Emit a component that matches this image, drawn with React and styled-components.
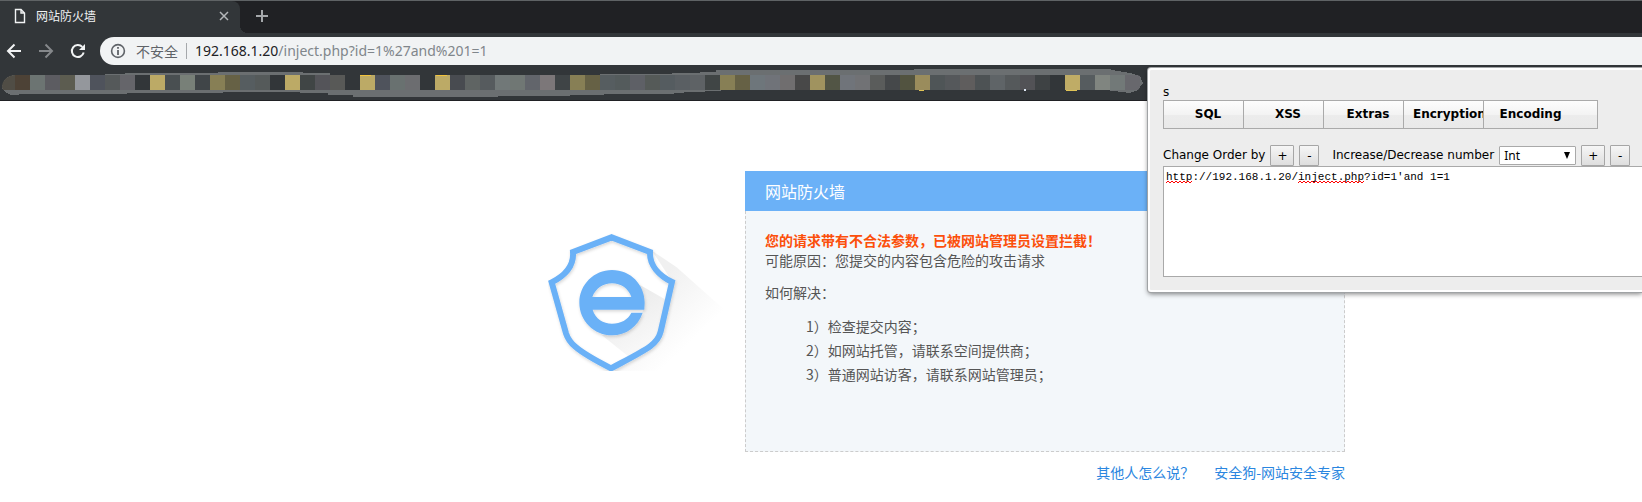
import React from "react";
import styled, { createGlobalStyle } from "styled-components";

const GlobalStyle = createGlobalStyle`
  * { box-sizing: border-box; }
  body {
    margin: 0;
    background: #fff;
    font-family: "Noto Sans CJK SC", sans-serif;
    font-size: 14px;
    line-height: 20px;
    overflow: hidden;
  }
`;

const Window = styled.div`
  position: relative;
  display: flex;
  flex-direction: column;
`;

/* Browser frame */

const TabStrip = styled.div`
  display: flex;
  align-items: stretch;
  height: 33px;
  background: #202124;
  border-top: 1px solid #5f6365;
`;

const Tab = styled.div`
  display: flex;
  align-items: center;
  gap: 10px;
  width: 240px;
  padding: 0 10px 2px 14px;
  background: #323639;
  border-radius: 0 8px 0 0;
  color: #f1f3f4;
  font-size: 12px;
`;

const TabTitle = styled.span`
  flex: 1;
`;

const IconButton = styled.button`
  display: flex;
  align-items: center;
  justify-content: center;
  flex: none;
  width: ${(p) => p.$size}px;
  height: ${(p) => p.$size}px;
  padding: 0;
  border: 0;
  background: none;
  color: ${(p) => p.$color || "#f1f3f4"};
`;

const NewTab = styled.div`
  display: flex;
  align-items: center;
  padding: 0 12px 2px;
`;

const Corner = styled.div`
  width: 8px;
  background: radial-gradient(circle at 100% 0, #202124 8px, #323639 8px);
  align-self: flex-end;
  height: 8px;
  margin-right: -8px;
`;

const Toolbar = styled.div`
  display: flex;
  align-items: center;
  gap: 12px;
  padding: 4px 0 4px 4px;
  background: #323639;
`;

const AddressBar = styled.div`
  display: flex;
  align-items: center;
  flex: 1;
  height: 28px;
  padding-left: 10px;
  border-radius: 14px 0 0 14px;
  background: #f1f3f4;
`;

const Security = styled.span`
  margin-left: 10px;
  padding-right: 8px;
  color: #5f6368;
  line-height: 16px;
  border-right: 1px solid #a5a8ab;
`;

const Url = styled.span`
  padding-left: 8px;
  color: #80868b;
  font-family: "Noto Sans", sans-serif;
`;

const Host = styled.span`
  color: #202124;
`;

const Bookmarks = styled.div`
  display: flex;
  height: 32px;
  background: #323639;
  border-bottom: 1px solid #202124;
  overflow: hidden;

  svg { flex: none; }
`;

/* Blocked page */

const Main = styled.main`
  display: flex;
  justify-content: center;
  align-items: flex-start;
  padding: 70px 0 0 251px;
`;

const LogoSlot = styled.div`
  flex: none;
  padding-top: 61px;

  svg { display: block; }
`;

const Notice = styled.section`
  width: 600px;
`;

const NoticeHeader = styled.h1`
  margin: 0;
  padding: 0 20px;
  background: #6bb1f7;
  color: #fff;
  font-size: 16px;
  font-weight: 400;
  line-height: 40px;
`;

const NoticeBody = styled.div`
  display: flex;
  flex-direction: column;
  gap: 12px;
  min-height: 241px;
  padding: 19px;
  border: 1px dashed #ccc;
  border-top: 0;
  background: #f3f7fa;
  color: #555;
`;

const Paragraph = styled.p`
  margin: 0;
`;

const Alert = styled.strong`
  display: block;
  color: #fc4f0b;
`;

const Steps = styled.ul`
  margin: 0;
  padding: 0 0 0 41px;
  list-style: none;
  line-height: 24px;
`;

const NoticeLinks = styled.nav`
  display: flex;
  justify-content: flex-end;
  gap: 20px;
  padding-top: 10px;
`;

const Link = styled.a`
  color: #2a86e0;
  text-decoration: none;
`;

/* Extension popup */

const Popup = styled.aside`
  position: absolute;
  top: 68px;
  right: 0;
  width: 494px;
  padding: 15px 0 13px 13px;
  border: 2px solid #fff;
  border-right: 0;
  border-radius: 3px 0 0 3px;
  background: #ededed;
  box-shadow: 0 0 0 1px #a0a3a5, 0 2px 5px rgba(0, 0, 0, 0.5);
  color: #000;
  font-family: "DejaVu Sans", sans-serif;
  font-size: 12px;
  line-height: 15px;
`;

const MenuBar = styled.div`
  display: inline-flex;
  height: 29px;
  margin-bottom: 16px;
  padding-right: 33px;
  border: 1px solid #aaa;
  background: linear-gradient(#fdfdfd, #f3f3f3 50%, #ececec 52%, #e9e9e9);
`;

const MenuItem = styled.button`
  width: 80px;
  padding: 0 0 2px 9px;
  border: 0;
  border-right: 1px solid #aaa;
  background: none;
  color: #000;
  font: bold 12px "DejaVu Sans", sans-serif;
  white-space: nowrap;
  overflow: hidden;

  &:last-child {
    padding-left: 13px;
    border-right: 0;
  }
`;

const Controls = styled.div`
  display: flex;
  align-items: center;
  gap: 5px;
  height: 21px;
`;

const Group = styled.div`
  display: flex;
  align-items: center;
  gap: 5px;
  margin-right: 8px;
`;

const StepButton = styled.button`
  width: ${(p) => (p.$wide ? 24 : 20)}px;
  height: 21px;
  padding: 0;
  border: 1px solid #a6a6a6;
  border-radius: 1px;
  background: linear-gradient(#f6f6f6, #dedede);
  color: #000;
  font: 12px "DejaVu Sans", sans-serif;
`;

const SelectWrap = styled.span`
  display: inline-flex;
  align-items: center;
  position: relative;

  svg {
    position: absolute;
    right: 6px;
    pointer-events: none;
  }
`;

const Select = styled.select`
  width: 77px;
  height: 19px;
  padding: 0 4px;
  appearance: none;
  border: 1px solid #a9a9a9;
  border-radius: 1px;
  background: #fff;
  color: #000;
  font: 12px "Noto Sans", sans-serif;
`;

const Editor = styled.div`
  position: relative;
  font: 11px/15px "Liberation Mono", monospace;

  svg {
    position: absolute;
    left: 3px;
    top: 14px;
    pointer-events: none;
  }
`;

const TextArea = styled.textarea`
  display: block;
  width: 100%;
  height: 111px;
  padding: 3px 2px;
  border: 1px solid #a9a9a9;
  border-right: 0;
  background: #fff;
  color: #000;
  font: inherit;
  resize: none;
`;

const BLANK = "#323639";
const GOLD = "#bcaa66";
const MOSAIC = [
  "#504d45", "#4d4236", "#6c7472", "#5c5c61", "#5c5c50", "#94979c", "#4f535c", "#55595a", "#65656a", BLANK,
  GOLD, "#494f51", "#788078", "#404548", "#877f55", "#666145", "#565d60", "#555a5a", BLANK, GOLD,
  "#404545", "#545459", "#585957", BLANK, GOLD, "#4f535c", "#697170", "#6c6d70", BLANK, GOLD,
  "#484b50", "#5f6463", "#565b5e", "#717878", "#707774", "#62656b", "#7c7779", "#3f4446", "#877f55", "#666145",
  "#565d60", "#545b5c", "#5e6066", "#555a58", "#555c60", "#5a5f63", "#5e6265", "#404545", "#877f55", "#666145",
  "#6e767b", "#707379", "#706e6f", "#484848", "#a0935f", "#525545", "#70747a", "#717275", "#5a5c5b", "#45484a",
  "#525340", "#9a8c5c", "#4f5557", "#55585b", "#5f5d5d", "#4d5254", "#5f6467", "#55595b", "#525256", "#3e4244",
  BLANK, "#bfac66", "#565c5f", "#808580", "#727978", "#68686d",
];

const SCRIBBLE =
  "M2 16C2 9 8 4 15 4H105V3H125V2H218V1H303V2H330V4H600V3H672V2H700V1H716V-1H914V-2H1110L1112 -1 1130 2 1140 5 1143 12 1138 19 1130 22 1106 19H721V20H705V21H684V22H674V23H604V24H570V25H498V26H353V24H328V22H300V21H223V22H127V23H19V24H11C5 21 2 19 2 16Z";

function BlurredBookmarks() {
  return (
    <svg width="1144" height="31" viewBox="0 -2 1144 31" aria-hidden="true" shapeRendering="crispEdges">
      <clipPath id="scribble">
        <path d={SCRIBBLE} />
      </clipPath>
      <path d={SCRIBBLE} fill="#6b6f71" />
      <g clipPath="url(#scribble)">
        {MOSAIC.map((color, i) => (
          <rect key={i} x={i * 15} y="4" width="15" height="15" fill={color} />
        ))}
      </g>
      <path d="M360 4h11M436 4h11" stroke="#f2c33c" />
      <path d="M919 19h5M1066 19h11" stroke="#e0c456" />
      <path d="M1024 18h2v2h-2z" fill="#dde6f2" />
    </svg>
  );
}

function Logo() {
  return (
    <svg width="197" height="139" viewBox="54 36 591 417" role="img" aria-label="logo">
      <defs>
        <linearGradient id="long" gradientUnits="userSpaceOnUse" x1="380" y1="180" x2="520" y2="330">
          <stop offset="0" stopColor="#e6e6e6" />
          <stop offset="1" stopColor="#fff" />
        </linearGradient>
        <linearGradient id="inner" gradientUnits="userSpaceOnUse" x1="300" y1="230" x2="390" y2="370">
          <stop offset="0" stopColor="#dedede" />
          <stop offset="1" stopColor="#f6f6f6" />
        </linearGradient>
        <filter id="soft" x="-10%" y="-10%" width="120%" height="120%">
          <feDropShadow dx="2" dy="5" stdDeviation="4" floodOpacity="0.16" />
        </filter>
      </defs>
      <path d="M366 92L440 142 600 284 480 452H250L400 340 430 190Z" fill="url(#long)" opacity="0.6" />
      <path
        d="M245 52L360 96C358 135 386 166 426 186L392 335C382 375 350 388 243 445 130 388 116 365 108 340L65 187C107 166 132 135 129 96Z"
        fill="#fff"
      />
      <path d="M330 195L418 245 392 335C382 370 345 392 302 415L214 344 246 345C290 340 315 325 336 280L343 262Z" fill="url(#inner)" opacity="0.6" />
      <path
        d="M245 52L360 96C358 135 386 166 426 186L392 335C382 375 350 388 243 445 130 388 116 365 108 340L65 187C107 166 132 135 129 96Z"
        fill="none"
        stroke="#6bb1f7"
        strokeWidth="18"
        filter="url(#soft)"
      />
      <path
        d="M343 269H188C196 296 220 311 246 311 272 311 294 299 304 278H338C324 320 288 346 246 346 192 346 148 302 148 248S192 150 246 150C302 150 344 194 344 248ZM187 231H304C295 205 272 190 246 190S197 205 187 231Z"
        fill="#6bb1f7"
        fillRule="evenodd"
        filter="url(#soft)"
      />
    </svg>
  );
}

/* Red zigzag drawn under the words the spell checker does not know. */
const SQUIGGLES = [
  { from: 0, to: 27 },
  { from: 132, to: 198 },
];

const zigzag = ({ from, to }) => {
  let d = `M${from} 3`;
  for (let x = from + 2, up = true; x <= to; x += 2, up = !up) d += `L${x} ${up ? 1 : 3}`;
  return d;
};

const MENU = ["SQL", "XSS", "Extras", "Encryption", "Encoding"];

export default function App() {
  return (
    <Window>
      <GlobalStyle />
      <TabStrip>
        <Tab>
          <svg width="12" height="16" viewBox="0 0 12 16" fill="none" stroke="#f1f3f4" strokeWidth="1.4">
            <path d="M1.5 1.5H7L10.5 5V14.5H1.5ZM7 1.5V5H10.5" />
          </svg>
          <TabTitle>网站防火墙</TabTitle>
          <IconButton $size={12} $color="#b4b7ba" aria-label="关闭">
            <svg width="10" height="10" viewBox="0 0 10 10" stroke="currentColor" strokeWidth="1.5">
              <path d="M1 1L9 9M9 1L1 9" />
            </svg>
          </IconButton>
        </Tab>
        <Corner />
        <NewTab>
          <IconButton $size={20} $color="#a4a7aa" aria-label="新标签页">
            <svg width="12" height="12" viewBox="0 0 12 12" stroke="currentColor" strokeWidth="2">
              <path d="M6 0V12M0 6H12" />
            </svg>
          </IconButton>
        </NewTab>
      </TabStrip>

      <Toolbar>
        <IconButton $size={20} aria-label="后退">
          <svg width="16" height="16" viewBox="0 0 16 16" fill="none" stroke="currentColor" strokeWidth="2">
            <path d="M15 8H2M8.5 1.5L2 8L8.5 14.5" />
          </svg>
        </IconButton>
        <IconButton $size={20} $color="#85888b" aria-label="前进">
          <svg width="16" height="16" viewBox="0 0 16 16" fill="none" stroke="currentColor" strokeWidth="2">
            <path d="M1 8H14M7.5 1.5L14 8L7.5 14.5" />
          </svg>
        </IconButton>
        <IconButton $size={20} aria-label="重新加载">
          <svg width="16" height="16" viewBox="0 0 16 16" fill="none" stroke="currentColor" strokeWidth="2">
            <path d="M13.7 9.6A6 6 0 1 1 12.3 3.9" />
            <path d="M15 1V7H9Z" fill="currentColor" stroke="none" />
          </svg>
        </IconButton>
        <AddressBar>
          <svg width="16" height="16" viewBox="0 0 16 16" fill="none" stroke="#5f6368" strokeWidth="1.6">
            <circle cx="8" cy="8" r="6.4" />
            <path d="M8 7V12M8 4V5.8" strokeWidth="1.8" />
          </svg>
          <Security>不安全</Security>
          <Url>
            <Host>192.168.1.20</Host>/inject.php?id=1%27and%201=1
          </Url>
        </AddressBar>
      </Toolbar>
      <Bookmarks>
        <BlurredBookmarks />
      </Bookmarks>

      <Main>
        <LogoSlot>
          <Logo />
        </LogoSlot>
        <Notice>
          <NoticeHeader>网站防火墙</NoticeHeader>
          <NoticeBody>
            <Paragraph>
              <Alert>您的请求带有不合法参数，已被网站管理员设置拦截！</Alert>
              可能原因：您提交的内容包含危险的攻击请求
            </Paragraph>
            <Paragraph>如何解决：</Paragraph>
            <Steps>
              <li>1）检查提交内容；</li>
              <li>2）如网站托管，请联系空间提供商；</li>
              <li>3）普通网站访客，请联系网站管理员；</li>
            </Steps>
          </NoticeBody>
          <NoticeLinks>
            <Link href="#others">其他人怎么说？</Link>
            <Link href="#safedog">安全狗-网站安全专家</Link>
          </NoticeLinks>
        </Notice>
      </Main>

      <Popup>
        <div>s</div>
        <MenuBar>
          {MENU.map((name) => (
            <MenuItem key={name}>{name}</MenuItem>
          ))}
        </MenuBar>
        <Controls>
          <Group>
            <span>Change Order by</span>
            <StepButton $wide>+</StepButton>
            <StepButton>-</StepButton>
          </Group>
          <label htmlFor="number-type">Increase/Decrease number</label>
          <SelectWrap>
            <Select id="number-type" defaultValue="Int">
              <option>Int</option>
            </Select>
            <svg width="6" height="7" viewBox="0 0 6 7">
              <path d="M0 0H6L3 7Z" fill="#000" />
            </svg>
          </SelectWrap>
          <StepButton $wide>+</StepButton>
          <StepButton>-</StepButton>
        </Controls>
        <Editor>
          <TextArea aria-label="URL" spellCheck={false} defaultValue="http://192.168.1.20/inject.php?id=1'and 1=1" />
          <svg width="200" height="4" viewBox="0 0 200 4" fill="none" stroke="#f00">
            {SQUIGGLES.map((s) => (
              <path key={s.from} d={zigzag(s)} />
            ))}
          </svg>
        </Editor>
      </Popup>
    </Window>
  );
}
